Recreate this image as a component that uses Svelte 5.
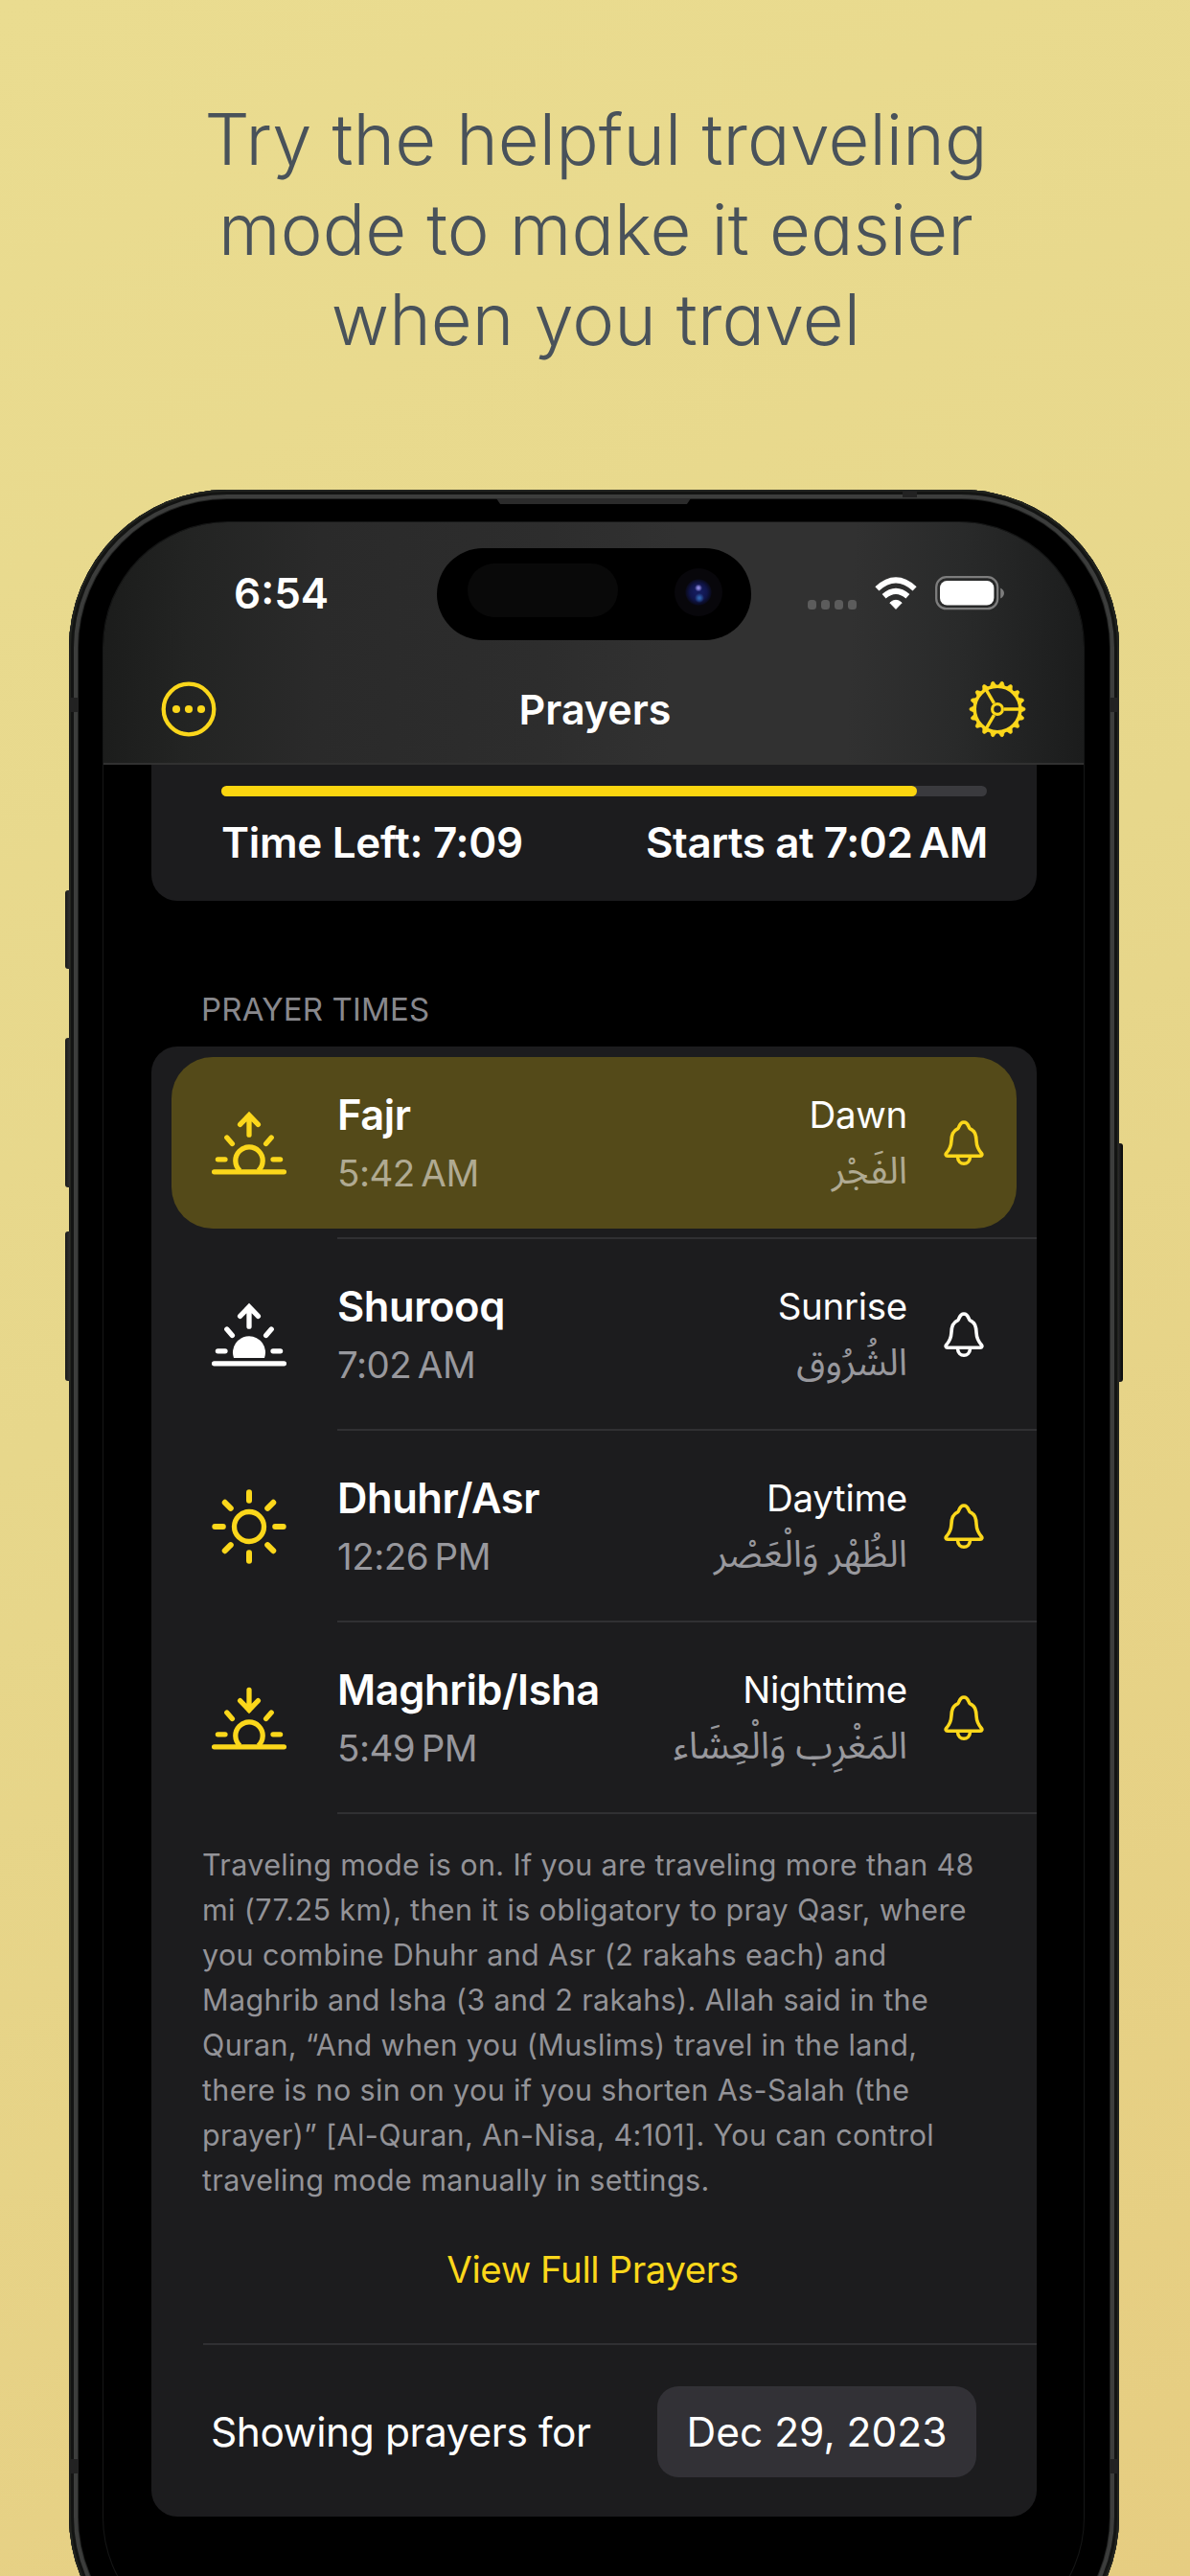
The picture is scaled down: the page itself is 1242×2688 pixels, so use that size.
<script>
  const prayers = [
    { name: 'Fajr', time: '5:42\u2009AM', label: 'Dawn', arabic: 'الفَجْر', icon: 'sunrise', current: true },
    { name: 'Shurooq', time: '7:02\u2009AM', label: 'Sunrise', arabic: 'الشُرُوق', icon: 'sunrise-fill', plain: true },
    { name: 'Dhuhr/Asr', time: '12:26\u2009PM', label: 'Daytime', arabic: 'الظُهْر وَالْعَصْر', icon: 'sun' },
    { name: 'Maghrib/Isha', time: '5:49\u2009PM', label: 'Nighttime', arabic: 'المَغْرِب وَالْعِشَاء', icon: 'sunset' }
  ];

  const note = [
    'Traveling mode is on. If you are traveling more than 48',
    'mi (77.25 km), then it is obligatory to pray Qasr, where',
    'you combine Dhuhr and Asr (2 rakahs each) and',
    'Maghrib and Isha (3 and 2 rakahs). Allah said in the',
    'Quran, “And when you (Muslims) travel in the land,',
    'there is no sin on you if you shorten As-Salah (the',
    'prayer)” [Al-Quran, An-Nisa, 4:101]. You can control',
    'traveling mode manually in settings.'
  ];

  const progress = 90.9;
  const teeth = Array.from({ length: 18 }, (_, i) => i * 20);
  const sunRays = Array.from({ length: 8 }, (_, i) => i * 45);
</script>

<main>
  <h1>Try the helpful traveling<br />mode to make it easier<br />when you travel</h1>

  <div class="phone">
    <i class="key action"></i>
    <i class="key up"></i>
    <i class="key down"></i>
    <i class="key power"></i>
    <i class="band b-left"></i>
    <i class="band b-right"></i>
    <i class="band b-top"></i>
    <i class="band b-left low"></i>
    <i class="band b-right low"></i>
    <i class="earpiece"></i>

    <div class="screen">
      <header>
        <div class="island">
          <i class="sensor"></i>
          <i class="camera"></i>
        </div>
        <div class="status">
          <span class="clock">6:54</span>
          <div class="signals">
            <div class="dots"><i></i><i></i><i></i><i></i></div>
            <svg class="wifi" width="44" height="34" viewBox="0 0 44 34">
              <path d="M22 33.4 15.8 27Q22 21.6 28.2 27Z" fill="#fff" stroke="#fff" stroke-width="1" stroke-linejoin="round" />
              <path d="M9.6 20.2Q22 9.4 34.4 20.2M2.4 12.4Q22 -5.6 41.6 12.4" fill="none" stroke="#fff" stroke-width="6" />
            </svg>
            <svg class="battery" width="73" height="36" viewBox="0 0 73 36">
              <rect x="1.2" y="1.2" width="64" height="33" rx="10.5" fill="none" stroke="#7d7d7d" stroke-width="2.3" />
              <rect x="5" y="5" width="56.4" height="25.4" rx="7.4" fill="#fff" />
              <path d="M68.2 12.4Q72 14.6 72 18T68.2 23.6Z" fill="#7d7d7d" />
            </svg>
          </div>
        </div>
        <div class="nav">
          <svg width="58" height="58" viewBox="-29 -29 58 58" fill="#fbd71b">
            <circle r="26.3" fill="none" stroke="#fbd71b" stroke-width="4.3" />
            <circle cx="-13" r="4.1" /><circle r="4.1" /><circle cx="13" r="4.1" />
          </svg>
          <h2>Prayers</h2>
          <svg width="60" height="60" viewBox="-30 -30 60 60" fill="none" stroke="#fbd71b">
            <circle r="23.8" stroke-width="3.6" />
            <circle r="5.4" stroke-width="3.2" />
            {#each [0, 120, 240] as a}
              <path d="M7 0H23" stroke-width="3.4" transform="rotate({a})" />
            {/each}
            {#each teeth as a}
              <path d="M24.6 -3.2 28.6 -1.3Q29.8 0 28.6 1.3L24.6 3.2Z" fill="#fbd71b" stroke-width="0.6" transform="rotate({a})" />
            {/each}
          </svg>
        </div>
      </header>

      <section class="card upcoming">
        <div class="track"><div class="fill" style="width: {progress}%"></div></div>
        <div class="times"><span>Time Left: 7:09</span><span class="starts">Starts at 7:02{'\u2009'}AM</span></div>
      </section>

      <h3>PRAYER TIMES</h3>

      <section class="card list">
        {#each prayers as p}
          <div class="row">
            <div class="cell" class:current={p.current} class:plain={p.plain}>
              <svg class="icon" width="82" height="82" viewBox="-41 -41 82 82" fill="none" stroke="currentColor" stroke-width="5.3" stroke-linecap="round">
                {#if p.icon === 'sun'}
                  <circle r="15.5" />
                  {#each sunRays as a}
                    <path d="M27.2 0H35.7" stroke-width="6" transform="rotate({a})" />
                  {/each}
                {:else}
                  <path d="M-36.4 29.8H36.4M-32.6 16.8H-25M25 16.8H32.6M-23.2 -6L-17.6 0.4M23.2 -6L17.6 0.4" />
                  {#if p.icon === 'sunset'}
                    <path d="M0 -29.6V-8.4M-9.4 -18.4L0 -8.6 9.4 -18.4" />
                  {:else}
                    <path d="M0 -8.8V-29M-9.4 -19.6L0 -29.4 9.4 -19.6" />
                  {/if}
                  {#if p.icon === 'sunrise-fill'}
                    <path d="M-16 24A17 17 0 1 1 16 24Z" fill="currentColor" stroke="none" />
                  {:else}
                    <path d="M-9.6 28.6A14.2 14.2 0 1 1 9.6 28.6" stroke-linecap="butt" />
                  {/if}
                {/if}
              </svg>
              <div class="left"><b>{p.name}</b><span>{p.time}</span></div>
              <div class="right"><em>{p.label}</em><span lang="ar" dir="rtl">{p.arabic}</span></div>
              <svg class="bell" width="42" height="48" viewBox="0 0 42 48" fill="none" stroke="currentColor" stroke-width="3.6" stroke-linejoin="round">
                <path d="M4 37.2C2 37.2 1.6 35.6 2.8 34.2 6 30.5 7.6 28 7.9 22 8.2 15 9.5 11 14.8 8.6 16.4 7.6 16 2 21 2S25.6 7.6 27.2 8.6C32.5 11 33.8 15 34.1 22 34.4 28 36 30.5 39.2 34.2 40.4 35.6 40 37.2 38 37.2Z" />
                <path d="M14.4 38C15 47.6 27 47.6 27.6 38" />
              </svg>
            </div>
            <hr />
          </div>
        {/each}

        <p>{#each note as line}{line}<br />{/each}</p>
        <div class="link">View Full Prayers</div>
        <hr class="wide" />
        <div class="date"><span>Showing prayers for</span><div class="pill">Dec 29, 2023</div></div>
      </section>
    </div>
  </div>
</main>

<style>
  :global(body) { margin: 0; }
  main {
    width: 1242px;
    height: 2688px;
    overflow: hidden;
    background: linear-gradient(150deg, #eadc90 0%, #e7d78b 45%, #e6cd81 100%);
    font-family: Inter, 'Noto Sans', sans-serif;
    display: flex;
    flex-direction: column;
    align-items: center;
  }
  h1, h2, h3, p, hr { margin: 0; border: 0; }
  h1 {
    padding: 98px 0 0 2px;
    height: 511px;
    box-sizing: border-box;
    flex: none;
    font-size: 74px;
    line-height: 94px;
    font-weight: 260;
    font-feature-settings: 'cv11';
    letter-spacing: 0.1px;
    color: #49525a;
    text-align: center;
    white-space: nowrap;
  }
  .phone {
    position: relative;
    flex: none;
    box-sizing: border-box;
    width: 1096px;
    height: 2280px;
    margin-right: 2px;
    padding: 34px 37px 34px 36px;
    border-radius: 165px;
    background: #000;
    box-shadow: inset 0 0 0 2px #22241f, inset 0 0 0 5px #131413, inset 0 0 0 9px #3c3d3c, inset 0 0 0 10px #222322;
  }
  .key { position: absolute; width: 5px; background: linear-gradient(90deg, #1a1a1a, #303030); border-radius: 3px 0 0 3px; left: -4px; }
  .action { top: 418px; height: 82px; }
  .up { top: 572px; height: 156px; }
  .down { top: 774px; height: 156px; }
  .power { left: auto; right: -4px; top: 682px; height: 249px; border-radius: 0 3px 3px 0; background: linear-gradient(270deg, #050505, #2b2b2b); }
  .band { position: absolute; background: #222; width: 9px; height: 15px; top: 217px; }
  .b-left { left: 1px; }
  .b-right { right: 1px; }
  .b-top { top: 1px; left: 870px; width: 15px; height: 7px; }
  .low { top: 2055px; }
  .earpiece { position: absolute; top: 9px; left: 446px; width: 203px; height: 6px; background: #2b2b2b; clip-path: polygon(0 0, 100% 0, 98% 100%, 2% 100%); }
  .screen {
    position: relative;
    height: 2212px;
    border-radius: 130px;
    overflow: hidden;
    background: #000;
    box-shadow: 0 0 0 1px #161717;
  }
  header {
    position: relative;
    box-sizing: border-box;
    height: 253px;
    padding-top: 50px;
    border-bottom: 2px solid #313131;
    background: linear-gradient(92deg, #1b1c1b 0%, #232423 9%, #2a2a2a 22%, #2d2d2d 45%, #313131 58%, #313131 76%, #292a2a 87%, #1b1c1c 100%);
  }
  .island { position: absolute; left: 348px; top: 27px; width: 328px; height: 96px; border-radius: 48px; background: #000; }
  .sensor { position: absolute; left: 32px; top: 16px; width: 157px; height: 56px; border-radius: 28px; background: #090909; }
  .camera {
    position: absolute;
    left: 248px;
    top: 21px;
    width: 50px;
    height: 50px;
    border-radius: 50%;
    background:
      radial-gradient(circle at 50% 41%, #8b86dc 0 1px, transparent 4px),
      radial-gradient(circle at 52% 62%, #2f62ac 0 1px, transparent 5px),
      radial-gradient(circle, #141b5c 0 4px, #10154a 9px, #0a0b20 13px, #08070b 14px);
  }
  .status { display: flex; align-items: center; justify-content: space-between; height: 48px; padding: 0 82px 0 136px; }
  .clock { font-size: 44px; font-weight: 600; line-height: 48px; color: #fff; }
  .signals { display: flex; align-items: center; }
  .dots { display: flex; gap: 5px; padding-top: 23px; margin-right: 19px; }
  .dots i { width: 9px; height: 10px; border-radius: 3.5px; background: #5c5c5c; }
  .wifi { margin-right: 19px; }
  .nav { display: flex; align-items: center; justify-content: space-between; height: 60px; margin-top: 67px; padding: 0 60px; }
  .nav svg { display: block; }
  h2 { padding-left: 5px; font-size: 43px; font-weight: 600; line-height: 60px; color: #fff; }
  .card { margin: 0 49px 0 50px; background: #1c1c1e; }
  .upcoming { box-sizing: border-box; height: 142px; padding: 22px 52px 0 73px; border-radius: 0 0 27px 27px; }
  .track { height: 11px; border-radius: 5.5px; background: #3a3a3e; }
  .fill { height: 11px; border-radius: 5.5px; background: #fad50f; }
  .times { display: flex; justify-content: space-between; margin-top: 26px; font-size: 44px; line-height: 44px; font-weight: 600; color: #fff; letter-spacing: -0.3px; white-space: nowrap; }
  .starts { letter-spacing: -0.43px; margin-right: -1px; }
  h3 { margin: 93px 0 19px 102px; font-size: 33px; font-weight: 400; line-height: 40px; letter-spacing: 0.16px; color: #88888d; }
  .list { box-sizing: border-box; height: 1534px; padding-top: 1px; border-radius: 27px; overflow: hidden; }
  .row { display: flex; flex-direction: column; height: 200px; }
  .cell { display: flex; box-sizing: border-box; height: 179px; margin: 10px 21px 9px; padding: 0 34px 0 40px; border-radius: 43px; color: #fbd71b; --dim: #98989d; }
  .current { background: #544a19; --dim: #b0aa92; }
  .plain { color: #fff; }
  hr { height: 2px; background: #303033; margin-left: 194px; }
  .icon { margin-top: 49px; flex: none; }
  .left { display: flex; flex-direction: column; margin-left: 51px; padding-top: 32px; white-space: nowrap; }
  b { font-size: 43.5px; font-weight: 600; line-height: 56px; letter-spacing: -0.45px; color: #fff; }
  .left span { margin-top: 5px; font-size: 38.5px; line-height: 56px; letter-spacing: -0.5px; color: var(--dim); }
  .right { display: flex; flex-direction: column; margin-left: auto; padding-top: 32px; text-align: right; white-space: nowrap; }
  em { font-style: normal; font-size: 38.5px; line-height: 56px; letter-spacing: -0.3px; color: #fff; }
  .right span { margin: 4px 0 1px; font-family: 'Noto Sans Arabic', 'Noto Sans', sans-serif; font-size: 39px; line-height: 56px; color: var(--dim); }
  .bell { margin: 66px 0 0 38px; flex: none; }
  p { margin: 29px 0 0 53px; font-size: 30.5px; line-height: 47px; letter-spacing: 0.37px; color: #939398; white-space: nowrap; }
  .link { margin: 45px 0 52px; padding-right: 3px; text-align: center; font-size: 38.5px; line-height: 50px; letter-spacing: -0.45px; color: #fbd71b; }
  hr.wide { margin-left: 54px; }
  .date { display: flex; align-items: center; justify-content: space-between; margin-top: 43px; padding: 0 63px 0 62px; font-size: 42.5px; line-height: 95px; letter-spacing: -0.43px; color: #fff; white-space: nowrap; }
  .pill { width: 333px; height: 95px; border-radius: 22px; background: #323136; text-align: center; letter-spacing: 0; }
</style>
